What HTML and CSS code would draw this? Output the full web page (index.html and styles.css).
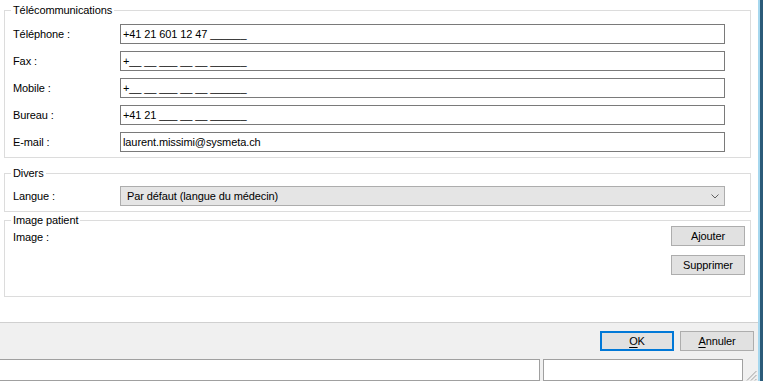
FILE: index.html
```html
<!DOCTYPE html>
<html lang="fr">
  <head>
    <meta charset="UTF-8" />
    <title>Fiche patient</title>
    <link rel="stylesheet" href="styles.css">
  </head>
  <body>
    <div class="window">
      <div class="client">
        <div class="content">
          <fieldset class="group group-tel">
            <legend>Télécommunications</legend>
            <div class="rows">
              <div class="form-row">
                <label>Téléphone :</label>
                <input class="field" type="text" value="+41 21 601 12 47 ______" />
              </div>
              <div class="form-row">
                <label>Fax :</label>
                <input class="field" type="text" value="+__ __ ___ __ __ ______" />
              </div>
              <div class="form-row">
                <label>Mobile :</label>
                <input class="field" type="text" value="+__ __ ___ __ __ ______" />
              </div>
              <div class="form-row">
                <label>Bureau :</label>
                <input class="field" type="text" value="+41 21 ___ __ __ ______" />
              </div>
              <div class="form-row">
                <label>E-mail :</label>
                <input class="field" type="text" value="laurent.missimi@sysmeta.ch" />
              </div>
            </div>
          </fieldset>

          <fieldset class="group group-divers">
            <legend>Divers</legend>
            <div class="form-row">
              <label>Langue :</label>
              <div class="combo">
                <span>Par défaut (langue du médecin)</span>
                <svg class="chevron" width="8" height="5" viewBox="0 0 8 5">
                  <polyline points="0.5,0.5 4,4 7.5,0.5" fill="none" stroke="#606060" stroke-width="1" />
                </svg>
              </div>
            </div>
          </fieldset>

          <fieldset class="group group-image">
            <legend>Image patient</legend>
            <div class="image-row">
              <label>Image :</label>
              <div class="image-buttons">
                <button class="btn">Ajouter</button>
                <button class="btn">Supprimer</button>
              </div>
            </div>
          </fieldset>
        </div>

        <!-- boutons du dialogue -->
        <div class="button-bar">
          <button class="btn btn-default"><u>O</u>K</button>
          <button class="btn"><u>A</u>nnuler</button>
        </div>

        <div class="status-bar">
          <div class="status-panel panel-main"></div>
          <div class="status-panel panel-side"></div>
          <svg class="grip" width="11" height="11" viewBox="0 0 11 11">
            <line x1="10.5" y1="1" x2="1" y2="10.5" stroke="#a0a0a0" />
            <line x1="10.5" y1="5" x2="5" y2="10.5" stroke="#a0a0a0" />
            <line x1="10.5" y1="9" x2="9" y2="10.5" stroke="#a0a0a0" />
          </svg>
        </div>
      </div>
      <div class="frame-right"></div>
    </div>
  </body>
</html>
```

FILE: styles.css
```css
body {
  margin: 0;
  width: 763px;
  height: 381px;
  overflow: hidden;
  font-family: "Liberation Sans", Arial, sans-serif;
  font-size: 11px;
  letter-spacing: -0.1px;
  color: #000;
  background: #fff;
}

.window {
  display: flex;
  height: 381px;
}

.client {
  width: 758px;
  display: flex;
  flex-direction: column;
  background: #fff;
}

.frame-right {
  width: 5px;
  background: linear-gradient(to right, #a6d7ee 0 2px, #2b5b79 2px);
}

.content {
  height: 322px;
  box-sizing: border-box;
  padding: 4px 7px 0 4px;
}

.group {
  margin: 0;
  min-width: 0;
  padding: 0 25px 5px 8px;
  border: 1px solid #dcdcdc;
}

.group legend {
  padding: 0 2px;
  margin-left: -2px;
  line-height: 12px;
  font-size: 11px;
}

.group-tel {
  padding-top: 8px;
}

.rows {
  display: flex;
  flex-direction: column;
  gap: 7px;
}

.form-row {
  display: flex;
  align-items: center;
  height: 20px;
}

.form-row label {
  width: 107px;
  flex-shrink: 0;
}

.field {
  width: 605px;
  height: 20px;
  box-sizing: border-box;
  margin: 0;
  padding: 0 0 0 2px;
  border: 1px solid #7a7a7a;
  font: inherit;
  letter-spacing: inherit;
  color: #000;
  background: #fff;
  outline: none;
}

.group-divers {
  margin-top: 9px;
  padding-top: 7px;
}

.combo {
  width: 606px;
  height: 20px;
  box-sizing: border-box;
  display: flex;
  align-items: center;
  padding: 0 5px 0 6px;
  border: 1px solid #adadad;
  background: #e5e5e5;
}

.chevron {
  margin-left: auto;
}

.group-image {
  margin-top: 2px;
  padding: 0 5px 21px 8px;
}

.image-row {
  display: flex;
  justify-content: space-between;
}

.image-row label {
  margin-top: 5px;
  line-height: 12px;
}

.image-buttons {
  display: flex;
  flex-direction: column;
  gap: 9px;
}

.btn {
  width: 74px;
  height: 20px;
  box-sizing: border-box;
  margin: 0;
  padding: 0;
  border: 1px solid #adadad;
  background: #e1e1e1;
  font: inherit;
  letter-spacing: inherit;
  color: #000;
}

.btn u {
  text-decoration-thickness: 1px;
  text-underline-offset: 2px;
}

.btn-default {
  border: 2px solid #0078d7;
}

.button-bar {
  height: 37px;
  box-sizing: border-box;
  display: flex;
  justify-content: flex-end;
  align-items: flex-start;
  gap: 6px;
  padding: 8px 4px 0 0;
  border-top: 1px solid #d0d0d0;
  background: #f0f0f0;
}

.status-bar {
  flex: 1;
  display: flex;
  gap: 3px;
  background: #f0f0f0;
}

.status-panel {
  box-sizing: border-box;
  height: 22px;
  border: 1px solid #a0a0a0;
  background: #fff;
}

.panel-main {
  width: 543px;
  border-left: none;
}

.panel-side {
  width: 201px;
}

.grip {
  margin-left: auto;
  margin-right: 1px;
  align-self: flex-end;
}
```
